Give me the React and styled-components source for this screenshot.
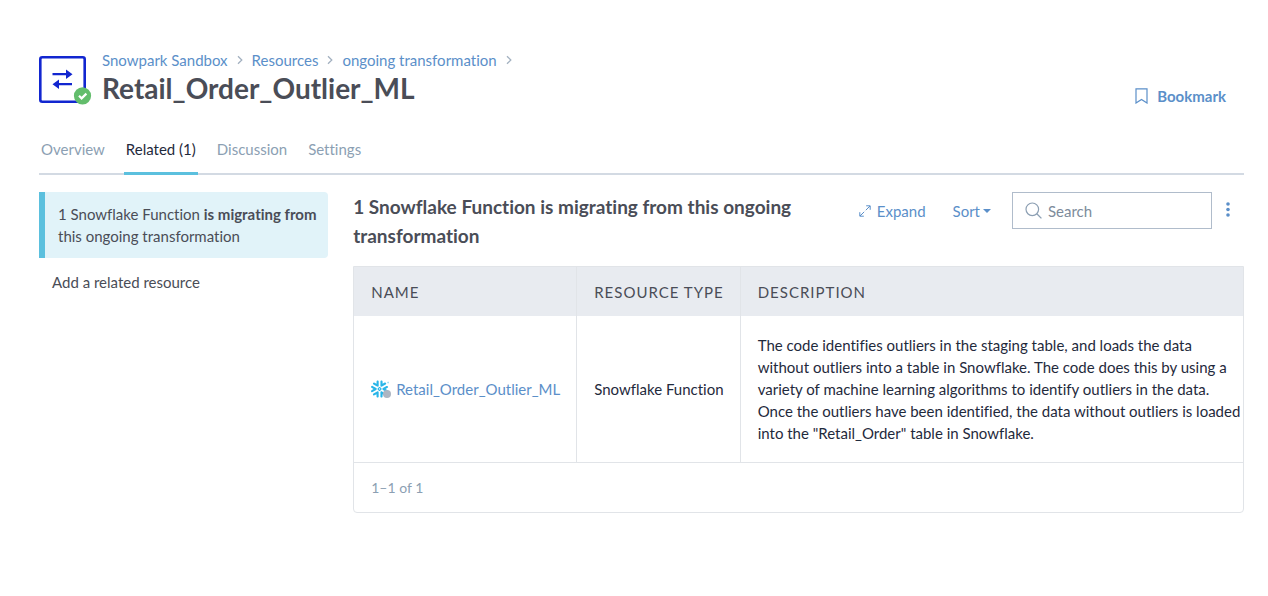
import { SiSnowflake } from 'react-icons/si';
import styled, { createGlobalStyle, ThemeProvider } from 'styled-components';

const theme = {
	colors: {
		link: '#5b8fc9',
		text: '#4a4d57',
		dark: '#1f2a3c',
		muted: '#8c9fb3',
		accent: '#5bc0de',
		accentLight: '#e1f3f9',
		line: '#d3dae3',
		border: '#e1e4e8',
		header: '#e8ebf0',
		brand: '#1226d0',
	},
};

const crumbs = ['Snowpark Sandbox', 'Resources', 'ongoing transformation'];
const tabs = ['Overview', 'Related (1)', 'Discussion', 'Settings'];

const rows = [
	{
		name: 'Retail_Order_Outlier_ML',
		type: 'Snowflake Function',
		description:
			'The code identifies outliers in the staging table, and loads the data without outliers into a table in Snowflake. The code does this by using a variety of machine learning algorithms to identify outliers in the data. Once the outliers have been identified, the data without outliers is loaded into the "Retail_Order" table in Snowflake.',
	},
];

const TransformIcon = () => (
	<svg width="53" height="49" viewBox="0 0 53 49" fill="none" aria-hidden="true">
		<rect x="1.3" y="1.3" width="44.4" height="44.4" rx="2" stroke={theme.colors.brand} strokeWidth="2.6" />
		<path d="M13.5 18.2h14M33 28.2H19" stroke={theme.colors.brand} strokeWidth="2.2" />
		<path d="M27 13.4v9.6l6.5-4.8zM20 23.4v9.6l-6.5-4.8z" fill={theme.colors.brand} />
		<circle cx="43.5" cy="39.8" r="8.6" fill="#63bd6c" />
		<path d="M40 39.8l2.6 2.6 4.8-4.8" stroke="#fff" strokeWidth="2.2" />
	</svg>
);

const BookmarkIcon = () => (
	<svg width="13" height="16" viewBox="0 0 13 16" fill="none" stroke="currentColor" aria-hidden="true">
		<path d="M1 .8h11v14.2l-5.5-3.6L1 15z" strokeWidth="1.2" />
	</svg>
);

const ExpandIcon = () => (
	<svg width="12" height="12" viewBox="0 0 12 12" fill="none" stroke="currentColor" aria-hidden="true">
		<path d="M7.2.8h4v4M11 1L6.8 5.2M4.8 11.2h-4v-4M1 11l4.2-4.2" strokeWidth="1" />
	</svg>
);

const CaretIcon = () => (
	<svg width="8" height="4" viewBox="0 0 8 4" fill="currentColor" aria-hidden="true">
		<path d="M0 0h8L4 4z" />
	</svg>
);

const SearchIcon = () => (
	<svg width="17" height="17" viewBox="0 0 17 17" fill="none" stroke="currentColor" aria-hidden="true">
		<circle cx="7.3" cy="7.3" r="6.3" strokeWidth="1.2" />
		<path d="M11.8 11.8l4.6 4.6" strokeWidth="1.3" />
	</svg>
);

const DotsIcon = () => (
	<svg width="4" height="15" viewBox="0 0 4 15" fill="currentColor" aria-hidden="true">
		<circle cx="2" cy="2" r="1.8" />
		<circle cx="2" cy="7.5" r="1.8" />
		<circle cx="2" cy="13" r="1.8" />
	</svg>
);

const ChevronIcon = () => (
	<svg width="6" height="10" viewBox="0 0 6 10" fill="none" stroke="#a3b1c0" aria-hidden="true">
		<path d="M1 1.2L4.8 5 1 8.8" strokeWidth="1.3" />
	</svg>
);

export default function App() {
	return (
		<ThemeProvider theme={theme}>
			<GlobalStyle />
			<Page>
				<Header>
					<TransformIcon />
					<Heading>
						<Breadcrumbs aria-label="Breadcrumb">
							{crumbs.map((crumb) => (
								<Crumb key={crumb}>
									<TextLink href="#">{crumb}</TextLink>
									<ChevronIcon />
								</Crumb>
							))}
						</Breadcrumbs>
						<Title>Retail_Order_Outlier_ML</Title>
					</Heading>
					<BookmarkButton type="button">
						<BookmarkIcon />
						Bookmark
					</BookmarkButton>
				</Header>

				<Tabs>
					{tabs.map((tab) => (
						<Tab key={tab} href="#" $active={tab === 'Related (1)'}>
							{tab}
						</Tab>
					))}
				</Tabs>

				<Columns>
					<Sidebar>
						<Relation href="#">
							1 Snowflake Function <strong>is migrating from</strong> this ongoing transformation
						</Relation>
						<AddLink href="#">Add a related resource</AddLink>
					</Sidebar>

					<Content>
						<Toolbar>
							<SectionTitle>
								1 Snowflake Function is migrating from this ongoing transformation
							</SectionTitle>
							<Actions>
								<ActionButton type="button" $gap={6}>
									<ExpandIcon />
									Expand
								</ActionButton>
								<ActionButton type="button" $gap={3}>
									Sort
									<CaretIcon />
								</ActionButton>
							</Actions>
							<SearchBox>
								<SearchIcon />
								<input type="search" placeholder="Search" aria-label="Search" />
							</SearchBox>
							<MenuButton type="button" aria-label="More options">
								<DotsIcon />
							</MenuButton>
						</Toolbar>

						<Card>
							<Table>
								<thead>
									<tr>
										<th>NAME</th>
										<th>RESOURCE TYPE</th>
										<th>DESCRIPTION</th>
									</tr>
								</thead>
								<tbody>
									{rows.map((row) => (
										<tr key={row.name}>
											<td>
												<NameCell>
													<ResourceIcon>
														<SiSnowflake />
														<StatusDot />
													</ResourceIcon>
													<TextLink href="#">{row.name}</TextLink>
												</NameCell>
											</td>
											<td>{row.type}</td>
											<td>{row.description}</td>
										</tr>
									))}
								</tbody>
							</Table>
							<Pagination>1–1 of 1</Pagination>
						</Card>
					</Content>
				</Columns>
			</Page>
		</ThemeProvider>
	);
}

const GlobalStyle = createGlobalStyle`
	* {
		box-sizing: border-box;
	}

	body {
		margin: 0;
		background: #fff;
		color: ${theme.colors.text};
		font-family: Lato, sans-serif;
		font-size: 15px;
		line-height: 22px;
		font-variant-ligatures: no-common-ligatures;
	}

	a {
		text-decoration: none;
	}

	button,
	input {
		font: inherit;
	}

	svg {
		flex-shrink: 0;
	}
`;

const Page = styled.main`
	padding: 49px 24px 24px 39px;
`;

const Header = styled.header`
	display: flex;
	align-items: flex-end;
	gap: 10px;
`;

const Heading = styled.div`
	flex: 1;
`;

const Breadcrumbs = styled.nav`
	display: flex;
	flex-wrap: wrap;
	gap: 9px;
`;

const Crumb = styled.span`
	display: flex;
	align-items: center;
	gap: 9px;
`;

const TextLink = styled.a`
	color: ${({ theme }) => theme.colors.link};
`;

const Title = styled.h1`
	margin: 0;
	font-size: 28px;
	line-height: 34px;
	font-weight: bold;
`;

const BookmarkButton = styled.button`
	display: flex;
	align-items: center;
	gap: 9px;
	padding: 0 18px 0 0;
	border: none;
	background: none;
	color: ${({ theme }) => theme.colors.link};
	font-weight: bold;
	line-height: 18px;
	cursor: pointer;
`;

const Tabs = styled.nav`
	display: flex;
	gap: 17px;
	margin-top: 31px;
	border-bottom: 2px solid ${({ theme }) => theme.colors.line};
`;

const Tab = styled.a`
	margin-bottom: -2px;
	padding: 2px 2px 12px;
	border-bottom: 3px solid ${({ theme, $active }) => ($active ? theme.colors.accent : 'transparent')};
	color: ${({ theme, $active }) => ($active ? theme.colors.dark : theme.colors.muted)};
`;

const Columns = styled.div`
	display: flex;
	gap: 25px;
	margin-top: 17px;
`;

const Sidebar = styled.aside`
	flex: 0 0 24%;
`;

const Relation = styled.a`
	display: block;
	padding: 11px 8px 11px 13px;
	border-left: 6px solid ${({ theme }) => theme.colors.accent};
	border-radius: 0 4px 4px 0;
	background: ${({ theme }) => theme.colors.accentLight};
	color: ${({ theme }) => theme.colors.text};
`;

const AddLink = styled.a`
	display: block;
	margin-top: 13px;
	padding-left: 13px;
	color: ${({ theme }) => theme.colors.text};
`;

const Content = styled.section`
	flex: 1;
	min-width: 0;
`;

const Toolbar = styled.div`
	display: flex;
	align-items: flex-start;
`;

const SectionTitle = styled.h2`
	flex: 1;
	margin: 0 48px 0 0;
	font-size: 19px;
	line-height: 29px;
	font-weight: bold;
`;

const Actions = styled.div`
	display: flex;
	gap: 27px;
	height: 37px;
	margin-right: 21px;
`;

const ActionButton = styled.button`
	display: flex;
	align-items: center;
	gap: ${({ $gap }) => $gap}px;
	padding: 0;
	border: none;
	background: none;
	color: ${({ theme }) => theme.colors.link};
	cursor: pointer;
`;

const SearchBox = styled.label`
	display: flex;
	align-items: center;
	gap: 6px;
	width: 200px;
	height: 37px;
	padding: 0 12px;
	border: 1px solid #b0bccb;
	color: ${({ theme }) => theme.colors.muted};

	input {
		width: 100%;
		min-width: 0;
		padding: 0;
		border: none;
		outline: none;
		background: none;
		color: ${({ theme }) => theme.colors.dark};
	}

	input::placeholder {
		color: #7d8b9b;
	}
`;

const MenuButton = styled.button`
	display: flex;
	align-items: center;
	height: 34px;
	margin: 0 14px;
	padding: 0;
	border: none;
	background: none;
	color: ${({ theme }) => theme.colors.link};
	cursor: pointer;
`;

const Card = styled.div`
	margin-top: 16px;
	border: 1px solid ${({ theme }) => theme.colors.border};
	border-radius: 0 0 4px 4px;
`;

const Table = styled.table`
	width: 100%;
	border-collapse: collapse;
	color: ${({ theme }) => theme.colors.dark};

	th,
	td {
		border-right: 1px solid ${({ theme }) => theme.colors.border};
		text-align: left;
		white-space: nowrap;
	}

	th {
		padding: 14px 16px 13px 17px;
		background: ${({ theme }) => theme.colors.header};
		color: ${({ theme }) => theme.colors.text};
		font-weight: normal;
		letter-spacing: 1px;
	}

	td {
		padding: 18px 16px 18px 17px;
		border-bottom: 1px solid ${({ theme }) => theme.colors.border};
	}

	th:last-child,
	td:last-child {
		width: 100%;
		padding-right: 2px;
		border-right: none;
		white-space: normal;
	}
`;

const NameCell = styled.div`
	display: flex;
	align-items: center;
	gap: 5px;
`;

const ResourceIcon = styled.span`
	position: relative;
	display: flex;
	width: 20px;
	color: #29b5e8;
	font-size: 18px;
`;

const StatusDot = styled.span`
	position: absolute;
	right: 0;
	bottom: 0;
	width: 8px;
	height: 8px;
	border-radius: 50%;
	background: #adb5c2;
`;

const Pagination = styled.div`
	padding: 14px 17px 13px;
	color: ${({ theme }) => theme.colors.muted};
	font-size: 14px;
`;
